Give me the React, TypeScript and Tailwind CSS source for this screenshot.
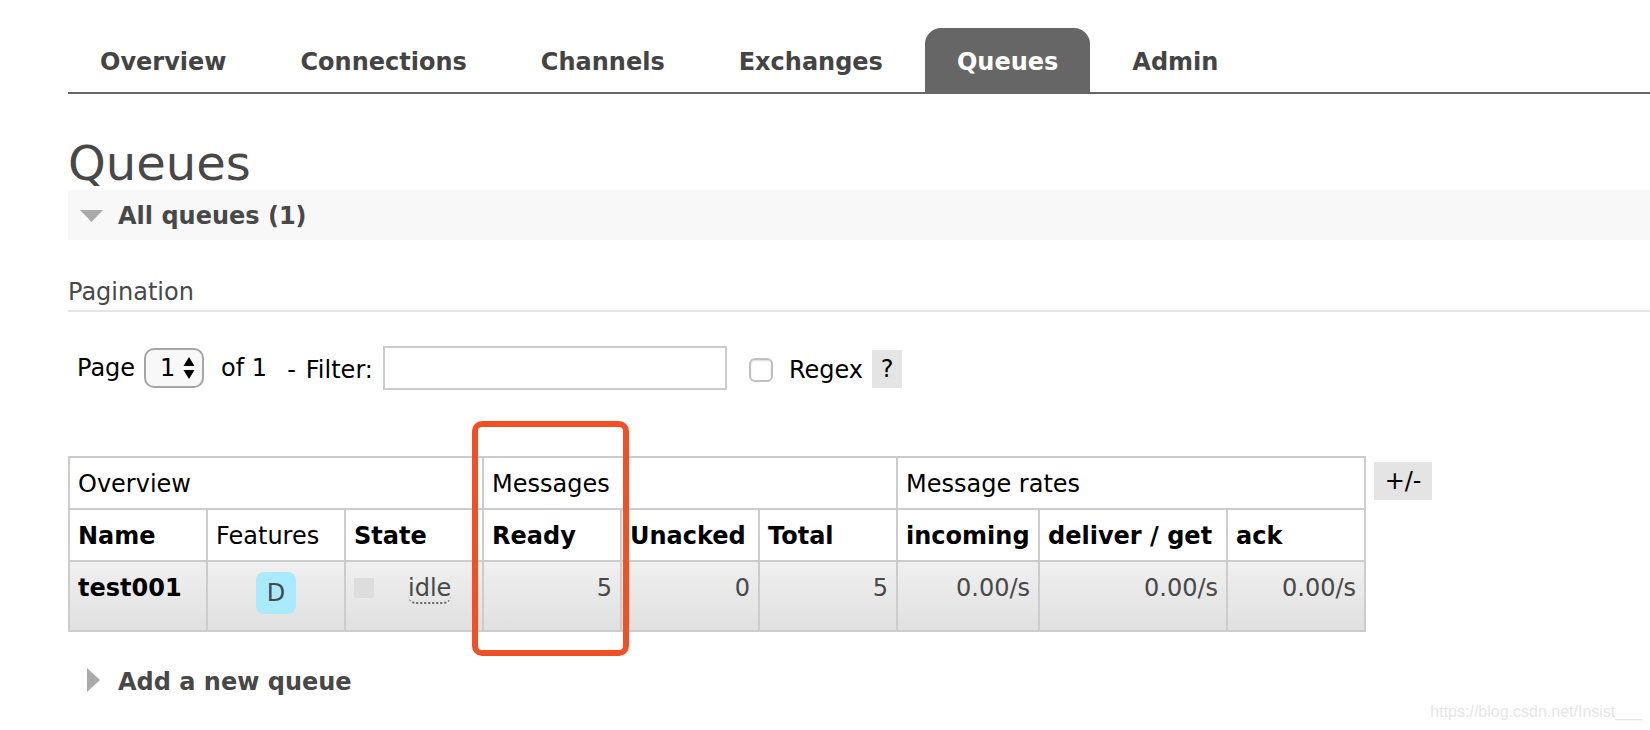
import type { ReactNode } from "react";

const tabs = ["Overview", "Connections", "Channels", "Exchanges", "Queues", "Admin"];

const groups = [
  { label: "Overview", span: 3 },
  { label: "Messages", span: 3 },
  { label: "Message rates", span: 3 },
];

const columns = [
  { label: "Name", width: "w-[138px]", sortable: true },
  { label: "Features", width: "w-[138px]", sortable: false },
  { label: "State", width: "w-[138px]", sortable: true },
  { label: "Ready", width: "w-[138px]", sortable: true },
  { label: "Unacked", width: "w-[138px]", sortable: true },
  { label: "Total", width: "w-[138px]", sortable: true },
  { label: "incoming", width: "w-[142px]", sortable: true },
  { label: "deliver / get", width: "w-[188px]", sortable: true },
  { label: "ack", width: "w-[138px]", sortable: true },
];

const queues = [
  {
    name: "test001",
    feature: "D",
    state: "idle",
    stats: ["5", "0", "5", "0.00/s", "0.00/s", "0.00/s"],
  },
];

function Tabs({ active }: { active: string }) {
  return (
    <nav className="border-b-2 border-[#666] pt-7">
      <ul className="flex gap-[10px]">
        {tabs.map((tab) => (
          <li key={tab}>
            <a
              href={`#${tab.toLowerCase()}`}
              className={`block h-16 rounded-t-2xl px-8 pt-[18px] font-bold leading-8 ${
                tab === active ? "bg-[#666] text-white" : "text-[#444]"
              }`}
            >
              {tab}
            </a>
          </li>
        ))}
      </ul>
    </nav>
  );
}

function SectionToggle({ open, children }: { open: boolean; children: ReactNode }) {
  return (
    <h2 className={open ? "bg-[#f8f8f8]" : ""}>
      <button
        type="button"
        aria-expanded={open}
        className="flex h-[50px] w-full items-center gap-3 pl-3 text-left font-bold text-[#484848]"
      >
        <svg width="26" height="26" viewBox="0 0 26 26" fill="#aaa" aria-hidden>
          {open ? <path d="M0 8h23L11.5 20z" /> : <path d="M7 0v24l13-12z" />}
        </svg>
        <span className="pt-[2px]">{children}</span>
      </button>
    </h2>
  );
}

function Filters() {
  return (
    <form className="flex items-center pl-[9px] pt-[34px]">
      <label htmlFor="page">Page</label>
      <div className="relative ml-[9px]">
        <select
          id="page"
          className="block h-10 w-[60px] appearance-none rounded-[10px] border-2 border-[#a6a6a6] bg-[#f8f8f8] pl-[14px] leading-none"
        >
          <option>1</option>
        </select>
        <svg
          width="12"
          height="22"
          viewBox="0 0 12 22"
          className="pointer-events-none absolute right-[9px] top-[9px]"
          aria-hidden
        >
          <path d="M6 0l5.5 9H.5zM6 22l5.5-9H.5z" />
        </svg>
      </div>
      <span className="ml-[17px]">of 1</span>
      <label htmlFor="filter" className="ml-5 flex gap-[10px] pt-1">
        <span>-</span>
        <span>Filter:</span>
      </label>
      <input id="filter" type="text" className="ml-[10px] h-11 w-[344px] border-2 border-[#ccc] px-2" />
      <input
        id="regex"
        type="checkbox"
        className="ml-[22px] mt-1 h-6 w-6 appearance-none rounded-md border-2 border-[#c0c0c0] bg-white shadow-[inset_0_1px_2px_#ddd]"
      />
      <label htmlFor="regex" className="ml-4 pt-1">
        Regex
      </label>
      <button type="button" className="ml-[9px] mt-[2px] h-[38px] w-[30px] bg-[#e4e4e4] text-center">
        ?
      </button>
    </form>
  );
}

function QueueTable() {
  return (
    <table className="w-[1298px] table-fixed border-collapse">
      <colgroup>
        {columns.map((c) => (
          <col key={c.label} className={c.width} />
        ))}
      </colgroup>
      <thead>
        <tr className="h-[52px]">
          {groups.map((g) => (
            <th
              key={g.label}
              colSpan={g.span}
              className="border-2 border-[#ccc] px-2 pt-[2px] text-left font-normal"
            >
              {g.label}
            </th>
          ))}
        </tr>
        <tr className="h-[52px]">
          {columns.map((c) => (
            <th
              key={c.label}
              className={`whitespace-nowrap border-2 border-[#ccc] px-2 pt-[2px] text-left ${
                c.sortable ? "font-bold" : "font-normal"
              }`}
            >
              {c.label}
            </th>
          ))}
        </tr>
      </thead>
      <tbody>
        {queues.map((q) => (
          <tr key={q.name} className="h-[70px] bg-linear-to-b from-[#f0f0f0] to-[#e0e0e0] align-top text-[#484848]">
            <td className="border-2 border-[#ccc] px-2 pt-[10px]">
              <a href={`#queues/${q.name}`} className="font-bold text-black">
                {q.name}
              </a>
            </td>
            <td className="border-2 border-[#ccc] pt-[10px] text-center">
              <span className="inline-block h-[42px] w-10 rounded-lg bg-[#aaeaff] leading-[42px]">
                {q.feature}
              </span>
            </td>
            <td className="border-2 border-[#ccc] px-2 pt-[10px]">
              <div className="flex items-start">
                <span className="mt-[6px] h-5 w-5 bg-[#ddd]" />
                <abbr
                  title="Idle"
                  className="ml-[34px] h-8 rounded-lg border-b-2 border-dotted border-[#666] leading-8 no-underline"
                >
                  {q.state}
                </abbr>
              </div>
            </td>
            {q.stats.map((value, i) => (
              <td key={i} className="border-2 border-[#ccc] px-2 pt-[10px] text-right">
                {value}
              </td>
            ))}
          </tr>
        ))}
      </tbody>
    </table>
  );
}

export default function App() {
  return (
    <div className="relative min-h-screen overflow-hidden bg-white pl-[68px] font-['DejaVu_Sans',Verdana,sans-serif] text-2xl leading-8 text-black">
      <Tabs active="Queues" />
      <main>
        <h1 className="pt-[42px] text-5xl leading-[54px] text-[#484848]">Queues</h1>
        <SectionToggle open>All queues (1)</SectionToggle>

        <h3 className="mt-9 border-b-2 border-[#e4e4e4] pb-[2px] text-[#484848]">Pagination</h3>
        <Filters />

        <div className="relative mt-[66px] flex items-start gap-2 pb-6">
          <QueueTable />
          <button type="button" className="mt-[6px] h-[38px] w-[58px] bg-[#e4e4e4] text-center">
            +/-
          </button>
          {/* marker around the Ready column */}
          <div className="pointer-events-none absolute -top-[35px] left-[404px] h-[235px] w-[157px] rounded-[10px] border-6 border-[#f05023]" />
        </div>

        <SectionToggle open={false}>Add a new queue</SectionToggle>
      </main>
      <p className="absolute bottom-2 right-2 font-['Liberation_Sans',Arial,sans-serif] text-base leading-5 text-[#e6e6e6]">
        https://blog.csdn.net/Insist___
      </p>
    </div>
  );
}
